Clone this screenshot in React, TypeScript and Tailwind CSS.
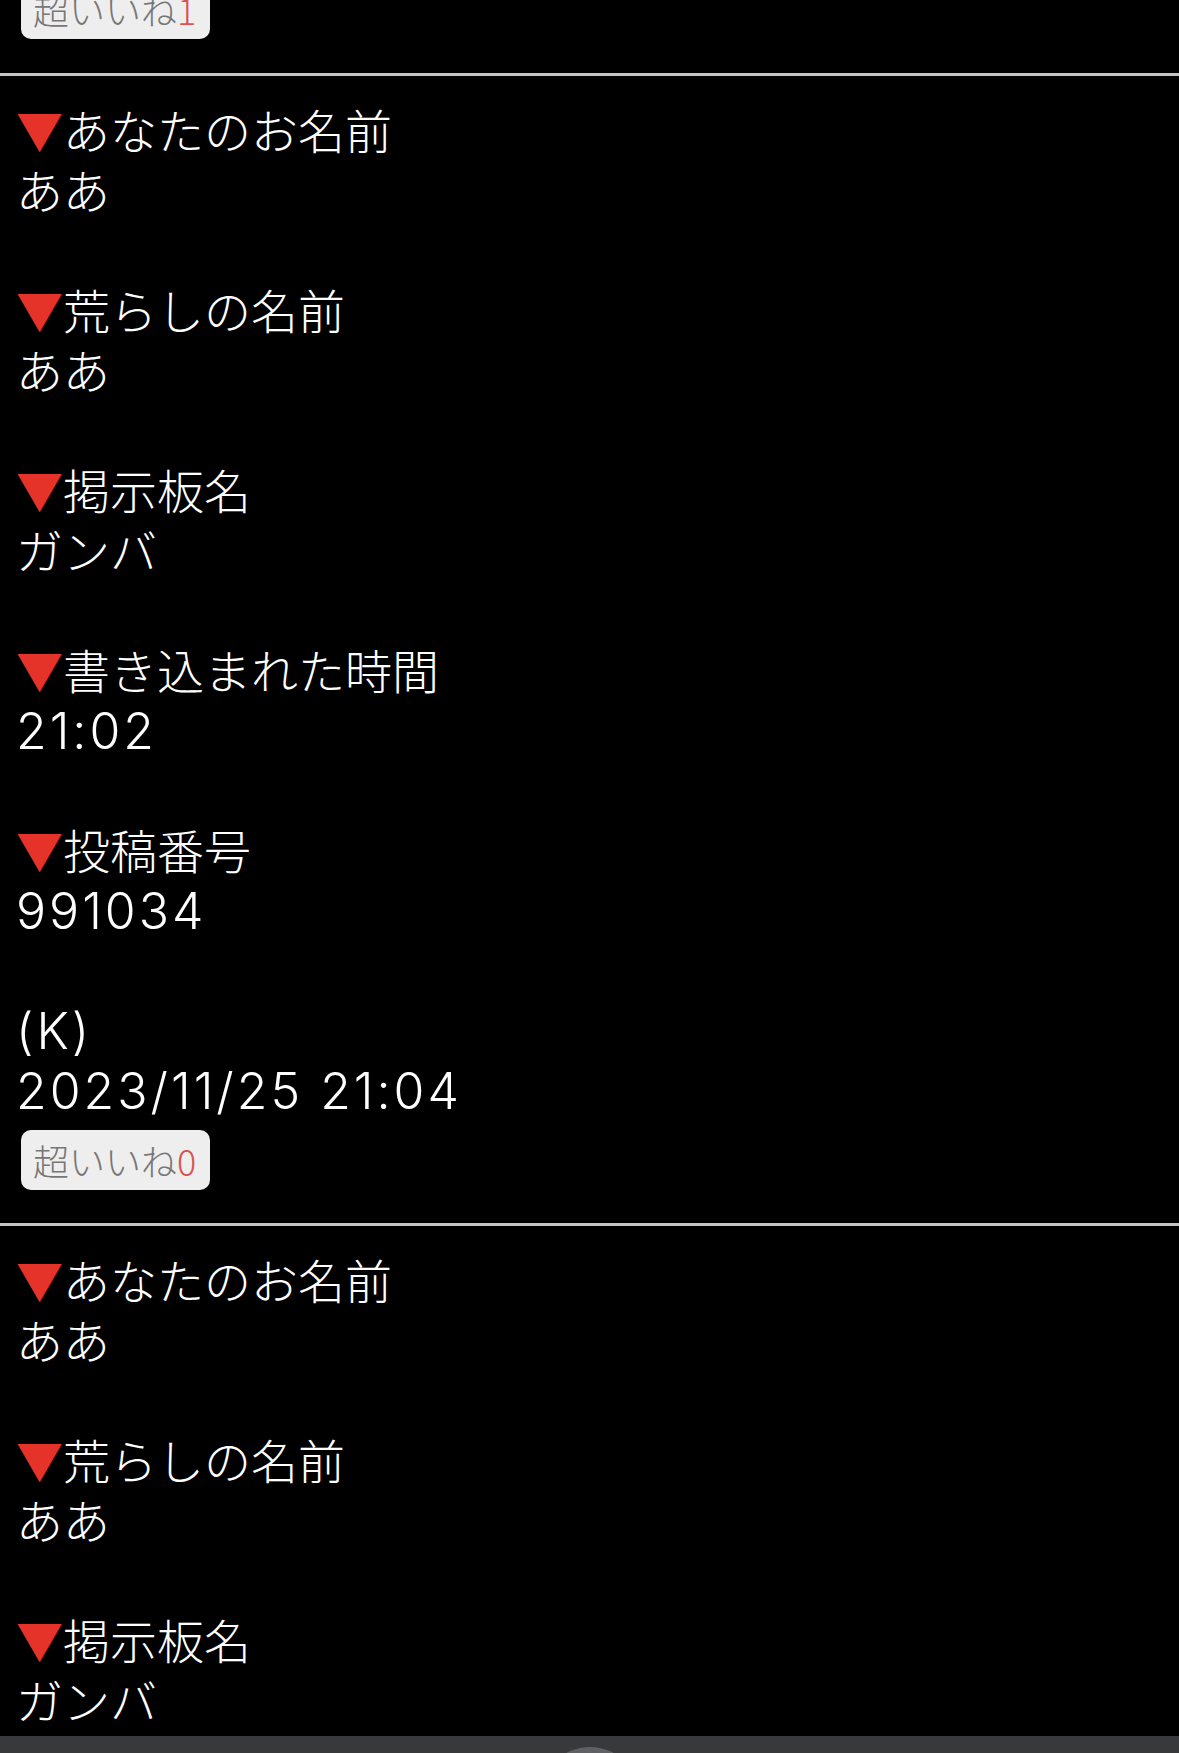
import React from "react";

const Tri = () => <span className="text-[#e5332a]">▼</span>;

const Num = ({ children }: { children: React.ReactNode }) => (
  <span className="font-['Inter','Liberation_Sans',sans-serif] font-light text-[50px] tracking-[3px]">{children}</span>
);

const Field = ({ label, value }: { label: string; value: React.ReactNode }) => (
  <>
    <div className="h-[60px] whitespace-nowrap">
      <Tri />
      {label}
    </div>
    <div className="h-[60px] whitespace-nowrap">{value}</div>
    <div className="h-[60px]" />
  </>
);

const Like = ({ n }: { n: number }) => (
  <div className="inline-flex h-[60px] items-center rounded-[10px] bg-[#eeeeee] pl-[12px] pr-[14px] text-[36px] leading-[56px] text-[#777777]">
    超いいね<span className="text-[#d9534f]">{n}</span>
  </div>
);

const Sep = () => <div className="h-[3px] w-full bg-[#c4c4c4]" />;

export default function App() {
  return (
    <div className="min-h-screen bg-black text-white font-['Noto_Sans_CJK_JP','Noto_Sans_CJK_SC',sans-serif] font-light text-[47px] leading-[52px]">
      <div className="flex h-[39px] items-end overflow-hidden pl-[21px]">
        <Like n={1} />
      </div>
      <div className="h-[34px]" />
      <Sep />
      <div className="flex flex-col px-[16px] pt-[27px]">
        <Field label="あなたのお名前" value="ああ" />
        <Field label="荒らしの名前" value="ああ" />
        <Field label="掲示板名" value="ガンバ" />
        <Field label="書き込まれた時間" value={<Num>21:02</Num>} />
        <Field label="投稿番号" value={<Num>991034</Num>} />
        <div className="h-[60px]">
          <Num>(K)</Num>
        </div>
        <div className="h-[60px]">
          <Num>2023/11/25 21:04</Num>
        </div>
        <div className="ml-[5px] mt-[7px]">
          <Like n={0} />
        </div>
        <div className="h-[33px]" />
      </div>
      <Sep />
      <div className="flex flex-col px-[16px] pt-[27px]">
        <Field label="あなたのお名前" value="ああ" />
        <Field label="荒らしの名前" value="ああ" />
        <Field label="掲示板名" value="ガンバ" />
        <Field label="書き込まれた時間" value={<Num>21:02</Num>} />
      </div>
      <div className="fixed bottom-0 left-0 right-0 h-[17px] overflow-hidden bg-[#38393b]">
        <div className="mx-auto mt-[11px] h-[100px] w-[100px] rounded-full bg-[#5f6164]" />
      </div>
    </div>
  );
}
